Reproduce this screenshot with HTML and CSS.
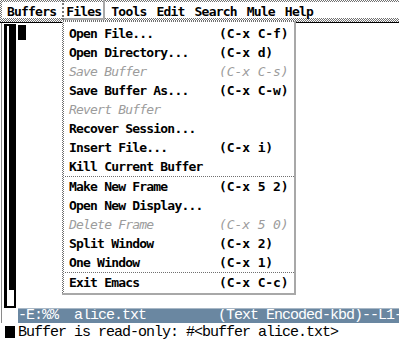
FILE: index.html
```html
<!DOCTYPE html>
<html lang="en">
<head>
<meta charset="UTF-8" />
<title>Emacs - alice.txt</title>
<link rel="stylesheet" href="styles.css">
</head>
<body>

<div class="screen">
  <div class="menubar">
    <div class="menubar-in">
      <span class="mb-item">Buffers</span>
      <span class="mb-item active">Files</span>
      <span class="mb-item">Tools</span>
      <span class="mb-item">Edit</span>
      <span class="mb-item">Search</span>
      <span class="mb-item">Mule</span>
      <span class="mb-item">Help</span>
    </div>
  </div>

  <div class="frame">
    <div class="main">
      <div class="scrollbar"><div class="thumb"></div></div>
      <div class="text"><span class="cursor"></span></div>
    </div>
    <div class="modeline-row">
      <div class="modeline">-E:%%  alice.txt         (Text Encoded-kbd)--L1-</div>
    </div>
  </div>

  <div class="echo">
    <span class="mini-cursor"></span>
    <span class="echo-text">Buffer is read-only: #&lt;buffer alice.txt&gt;</span>
  </div>

  <!-- Files menu, dropped down -->
  <div class="popup">
    <div class="popup-in">
      <div class="item"><span>Open File...</span><span class="key">(C-x C-f)</span></div>
      <div class="item"><span>Open Directory...</span><span class="key">(C-x d)</span></div>
      <div class="item off"><span>Save Buffer</span><span class="key">(C-x C-s)</span></div>
      <div class="item"><span>Save Buffer As...</span><span class="key">(C-x C-w)</span></div>
      <div class="item off"><span>Revert Buffer</span><span class="key"></span></div>
      <div class="item"><span>Recover Session...</span><span class="key"></span></div>
      <div class="item"><span>Insert File...</span><span class="key">(C-x i)</span></div>
      <div class="item"><span>Kill Current Buffer</span><span class="key"></span></div>
      <div class="sep"></div>
      <div class="item"><span>Make New Frame</span><span class="key">(C-x 5 2)</span></div>
      <div class="item"><span>Open New Display...</span><span class="key"></span></div>
      <div class="item off"><span>Delete Frame</span><span class="key">(C-x 5 0)</span></div>
      <div class="item"><span>Split Window</span><span class="key">(C-x 2)</span></div>
      <div class="item"><span>One Window</span><span class="key">(C-x 1)</span></div>
      <div class="sep"></div>
      <div class="item"><span>Exit Emacs</span><span class="key">(C-x C-c)</span></div>
    </div>
  </div>
</div>

</body>
</html>
```

FILE: styles.css
```css
body { margin: 0; width: 399px; height: 341px; overflow: hidden; background: #fff; }
.screen { position: relative; height: 341px; display: flex; flex-direction: column; }

/* stipple = 1px checker like the X toolkit draws */
.menubar, .popup, .sep {
  background: repeating-conic-gradient(#707070 0 25%, #fff 0 50%) 0 0 / 2px 2px;
}

.menubar {
  height: 23px; box-sizing: border-box; padding: 2px 0 4px 2px;
  border-bottom: 1px solid #000;
}
.menubar-in {
  height: 16px; background: #fff; display: flex; align-items: flex-start;
  gap: 2px; padding-left: 1px;
  font: bold 13px "DejaVu Sans Mono", monospace; letter-spacing: -0.8px; color: #000;
}
.mb-item { height: 16px; box-sizing: border-box; padding: 2px 4px 0; line-height: 16px; white-space: pre; }
.mb-item.active {
  margin-top: -2px; height: 20px; padding: 4px 4px 0 2px;
  border-left: 2px dotted #777;
  box-shadow: inset -2px -2px 0 #a8a8a8;
}

.frame { margin-left: 1px; border-left: 1px solid #8a8a8a; flex: 1; display: flex; flex-direction: column; }
.main { flex: 1; display: flex; align-items: flex-start; gap: 2px; }
.scrollbar {
  margin: 1px 0 0 2px; width: 12px; height: 284px; box-sizing: border-box;
  border: 2px solid #000; border-left-width: 3px; background: #fff;
  display: flex; flex-direction: column; align-items: flex-end;
}
.thumb { width: 5px; height: 264px; background: #000; }
.cursor { display: block; width: 8px; height: 15px; margin-top: 2px; background: #000; }

.modeline-row { padding-left: 16px; }
.modeline {
  height: 15px; box-sizing: border-box; border-top: 1px solid #a9b8c6;
  background: #6a87a1; color: #fff; white-space: pre; overflow: hidden;
  font: 15px "Liberation Mono", monospace; letter-spacing: -1px; line-height: 14px;
}

.echo { height: 18px; display: flex; align-items: flex-start; padding-left: 5px; }
.mini-cursor { width: 10px; height: 12px; margin: 3px 3px 0 0; background: #000; }
.echo-text {
  padding-top: 2px; white-space: pre;
  font: 15px "Liberation Mono", monospace; letter-spacing: -1px; line-height: 16px;
}

.popup {
  position: absolute; left: 62px; top: 21px; width: 234px; box-sizing: border-box;
  padding: 1px 0 0 2px;
  border-right: 2px solid #a8a8a8; border-bottom: 2px solid #a8a8a8;
}
.popup-in {
  background: #fff; padding: 2px 6px 1px 5px;
  font: bold 13px "DejaVu Sans Mono", monospace; letter-spacing: -0.8px; color: #000;
}
.item { display: grid; grid-template-columns: 150px auto; height: 19px; box-sizing: border-box; padding-top: 1px; line-height: 18px; white-space: pre; }
.item .key { letter-spacing: -0.1px; }
.item.off { color: #9c9c9c; font-weight: normal; font-style: italic; }
.sep { height: 1px; margin: 0 -6px 0 -5px; }
```
